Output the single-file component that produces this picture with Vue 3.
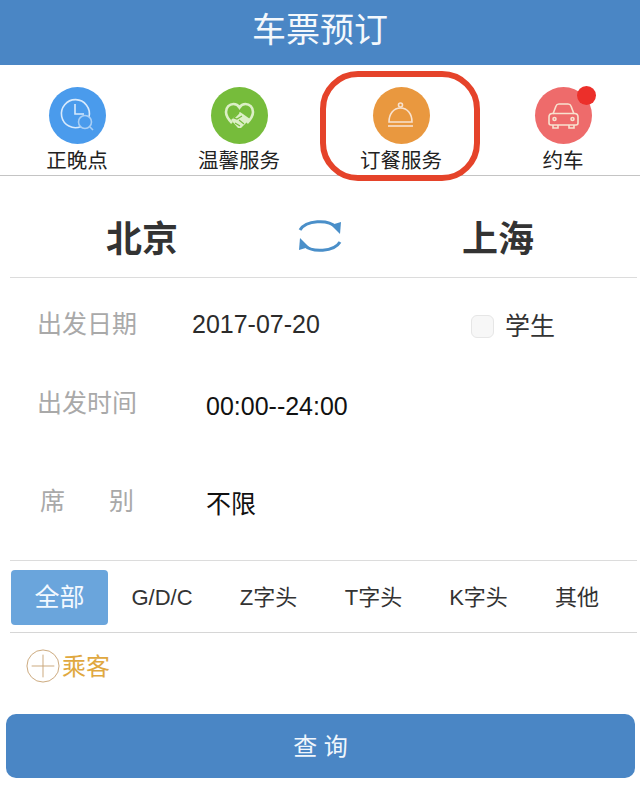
<template>
  <div class="page">
    <header class="title">车票预订</header>

    <nav class="services">
      <div v-for="item in services" :key="item.name" class="service">
        <div class="circle" :class="item.cls">
          <svg v-if="item.cls === 'blue'" viewBox="0 0 57 57" class="glyph">
            <path d="M32 39.500A14 14 0 1 1 40 30" />
            <path d="M26 17v10h9" />
            <circle cx="36" cy="35" r="6.500" class="dim" />
            <path d="M41 40l3 3" class="dim" />
          </svg>
          <svg v-else-if="item.cls === 'green'" viewBox="0 0 57 57" class="glyph">
            <path d="M21 36c-3-3-6-7-6-11 0-5 3.500-8 7.500-8 2.500 0 4.500 1 6 3.500 1.500-2.500 3.500-3.500 6-3.500 4 0 7.500 3 7.500 8 0 4-3 8-6 11" />
            <path d="M20 33l9-8 3 2 7 5-9 9h-3z" class="hand" />
            <path d="M28 26l-5 5 3 1 5-3M24 36l5 3M28 33l5 4" class="fold" />
          </svg>
          <svg v-else-if="item.cls === 'orange'" viewBox="0 0 57 57" class="glyph">
            <circle cx="27.500" cy="18" r="2" />
            <path d="M16 35c0-8 4.500-14 11.500-14S39 27 39 35z" />
            <path d="M15 39h25" />
          </svg>
          <svg v-else viewBox="0 0 57 57" class="glyph">
            <path d="M18 27l3-8c.5-1.500 1.500-2 3-2h9c1.500 0 2.500.5 3 2l3 8" />
            <path d="M14 30c0-2 1.500-3.500 3.500-3.500h22c2 0 3.500 1.500 3.500 3.500v6c0 1-1 2-2 2H16c-1 0-2-1-2-2z" />
            <path d="M18 38v3h5v-3M34 38v3h5v-3" />
            <circle cx="19.500" cy="32" r="1.500" />
            <circle cx="37.500" cy="32" r="1.500" />
          </svg>
          <span v-if="item.dot" class="dot"></span>
        </div>
        <span class="service-name">{{ item.name }}</span>
        <span v-if="item.marked" class="mark"></span>
      </div>
    </nav>

    <section class="route">
      <span class="city">北京</span>
      <svg viewBox="0 0 44 34" class="swap">
        <path d="M2 11C8 1 30 0 38 8" />
        <path d="M33 6l10-3-1 12z" class="arrow" />
        <path d="M42 23C36 33 14 34 6 26" />
        <path d="M11 28L1 31l1-12z" class="arrow" />
      </svg>
      <span class="city">上海</span>
    </section>

    <section class="form">
      <div class="row date-row">
        <span class="label">出发日期</span>
        <span class="date">2017-07-20</span>
        <label class="student"><span class="check"></span>学生</label>
      </div>
      <div class="row time-row">
        <span class="label">出发时间</span>
        <span class="value">00:00--24:00</span>
      </div>
      <div class="row seat-row">
        <span class="label seat-label"><span>席</span><span>别</span></span>
        <span class="value">不限</span>
      </div>
    </section>

    <section class="tabs">
      <span v-for="(tab, i) in tabs" :key="tab" class="tab" :class="{ active: i === 0 }">{{ tab }}</span>
    </section>

    <section class="passenger">
      <svg viewBox="0 0 36 36" class="plus">
        <circle cx="18" cy="18" r="17" />
        <path d="M18 6v24M6 18h24" />
      </svg>
      <span class="passenger-name">乘客</span>
    </section>

    <button class="search">查 询</button>
  </div>
</template>

<script setup>
const services = [
  { name: '正晚点', cls: 'blue' },
  { name: '温馨服务', cls: 'green' },
  { name: '订餐服务', cls: 'orange', marked: true },
  { name: '约车', cls: 'red', dot: true }
]

const tabs = ['全部', 'G/D/C', 'Z字头', 'T字头', 'K字头', '其他']
</script>

<style>
body {
  margin: 0;
  background: #fff;
}
</style>

<style scoped>
.page {
  width: 640px;
  height: 790px;
  overflow: hidden;
  background: #fff;
  font-family: "Liberation Sans", "Noto Sans CJK SC", sans-serif;
  color: #222;
}
.title {
  height: 65px;
  line-height: 61px;
  text-align: center;
  background: #4a86c5;
  color: #f4f8fc;
  font-size: 34px;
}
.services {
  display: grid;
  grid-template-columns: repeat(4, 162px);
  justify-content: center;
  height: 110px;
  border-bottom: 1px solid #c4c4c4;
}
.service {
  position: relative;
  display: flex;
  flex-direction: column;
  align-items: center;
  padding-top: 22px;
}
.circle {
  position: relative;
  width: 57px;
  height: 57px;
  border-radius: 50%;
}
.blue { background: #4a9bec; }
.green { background: #76bc3b; }
.orange { background: #e9983f; }
.red { background: #ee6b6b; }
.glyph {
  display: block;
  width: 57px;
  height: 57px;
  fill: none;
  stroke: #f8e2cf;
  stroke-width: 1.6;
}
.blue .glyph { stroke: #d8eafc; }
.blue .dim { stroke: #a9cff5; }
.green .glyph { stroke: #dcefc6; stroke-width: 2.6; }
.green .hand { fill: #dcefc6; stroke: none; }
.green .fold { stroke: #76bc3b; stroke-width: 1.2; }
.dot {
  position: absolute;
  top: -1px;
  right: -4px;
  width: 19px;
  height: 19px;
  border-radius: 50%;
  background: #ec2f2a;
}
.service-name {
  margin-top: 5px;
  font-size: 20.5px;
  line-height: 24px;
  color: #222;
}
.mark {
  position: absolute;
  top: 6px;
  left: 0;
  width: 160px;
  height: 110px;
  box-sizing: border-box;
  border: 6px solid #e5432a;
  border-radius: 38px;
}
.route {
  display: grid;
  grid-template-columns: 284px 72px 284px;
  align-items: center;
  justify-items: center;
  box-sizing: border-box;
  height: 101px;
  padding-top: 18px;
}
.city {
  font-size: 36px;
  font-weight: 700;
  color: #333;
}
.swap {
  width: 44px;
  height: 34px;
  fill: none;
  stroke: #4a8fc9;
  stroke-width: 3;
}
.swap .arrow {
  fill: #4a8fc9;
  stroke: none;
}
.form {
  margin: 0 3px 0 10px;
  height: 284px;
  border-top: 1px solid #dcdcdc;
  border-bottom: 1px solid #dcdcdc;
  box-sizing: border-box;
  font-size: 25px;
}
.row {
  position: relative;
  display: flex;
  align-items: flex-start;
  line-height: 30px;
}
.label {
  width: 100px;
  margin-left: 27px;
  color: #a9a9a9;
}
.date-row {
  padding-top: 31px;
}
.date {
  margin-left: 55px;
  color: #2b2b2b;
}
.student {
  display: flex;
  align-items: center;
  margin-left: 151px;
  margin-top: 2px;
  color: #333;
}
.check {
  width: 21px;
  height: 21px;
  margin-right: 11px;
  border: 1px solid #e6e6e6;
  border-radius: 6px;
  background: #f7f7f7;
}
.time-row {
  padding-top: 47px;
}
.value {
  margin-left: 69px;
  margin-top: 3px;
  color: #111;
}
.seat-row {
  padding-top: 65px;
}
.seat-label {
  display: flex;
  justify-content: space-between;
  width: 94px;
  margin-left: 30px;
}
.seat-row .value {
  margin-left: 72px;
  margin-top: 3px;
}
.tabs {
  display: grid;
  grid-template-columns: 97px 108px 105px 105px 105px 92px;
  align-items: center;
  height: 72px;
  margin: 0 3px 0 10px;
  border-bottom: 1px solid #d6d6d6;
  box-sizing: border-box;
  font-size: 22px;
  text-align: center;
  color: #333;
  padding: 9px 0 7px 1px;
}
.tab {
  line-height: 55px;
}
.active {
  background: #6aa5dc;
  color: #f3f9ff;
  border-radius: 4px;
  font-size: 25px;
}
.passenger {
  display: flex;
  align-items: center;
  height: 66px;
  padding-left: 26px;
  font-size: 24px;
  color: #e0a83f;
}
.passenger-name {
  margin-bottom: 4px;
}
.plus {
  width: 34px;
  height: 34px;
  margin-right: 2px;
  fill: none;
  stroke: #c9a577;
  stroke-width: 1;
}
.search {
  display: block;
  width: 629px;
  height: 64px;
  margin: 15px 0 0 6px;
  padding: 0 0 4px;
  border: none;
  border-radius: 10px;
  background: #4a86c5;
  color: #f0f6fc;
  font-family: inherit;
  font-size: 24px;
}
</style>
